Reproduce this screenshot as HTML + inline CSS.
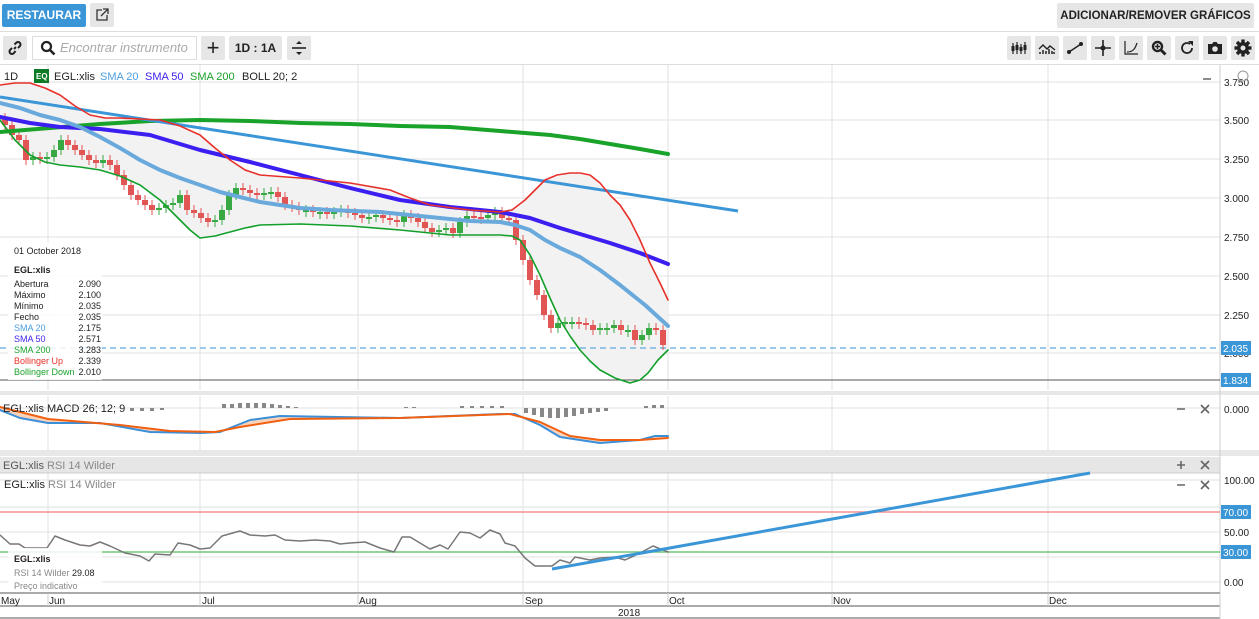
<!DOCTYPE html>
<html><head><meta charset="utf-8">
<style>
*{margin:0;padding:0;box-sizing:border-box}
body{width:1259px;height:619px;background:#fff;font-family:"Liberation Sans",Arial,sans-serif;position:relative;overflow:hidden;color:#222}
.a{position:absolute}
.btn{position:absolute;background:#e6e6e6;border-radius:2px;display:flex;align-items:center;justify-content:center;font-size:12px;font-weight:bold;color:#222;white-space:nowrap}
polyline{stroke-linejoin:round;stroke-linecap:round}
</style></head><body>
<div class="a" style="left:2px;top:4px;width:84px;height:23px;background:#3b96d8;border-radius:2px;color:#fff;font-weight:bold;font-size:12px;line-height:23px;text-align:center">RESTAURAR</div>
<div class="btn" style="left:90px;top:3px;width:24px;height:24px"><svg width="14" height="14" viewBox="0 0 14 14"><path d="M7 2H2v10h10V7" fill="none" stroke="#333" stroke-width="1.3"/><path d="M8 1h5v5M13 1L6 8" fill="none" stroke="#333" stroke-width="1.3"/></svg></div>
<div class="btn" style="left:1057px;top:3px;width:197px;height:25px;font-size:11.5px">ADICIONAR/REMOVER GRÁFICOS</div>
<div class="a" style="left:0;top:31px;width:1259px;height:1px;background:#ddd"></div>
<div class="btn" style="left:3px;top:36px;width:24px;height:24px"><svg width="16" height="16" viewBox="0 0 16 16"><path d="M7 9l2-2M5 8L3 10a2.5 2.5 0 003.5 3.5L8.5 11M11 8l2-2A2.5 2.5 0 009.5 2.5L7.5 4.5" fill="none" stroke="#222" stroke-width="2"/></svg></div>
<div class="a" style="left:32px;top:36px;width:165px;height:24px;border:1px solid #ddd;background:#fff"></div>
<svg class="a" style="left:40px;top:40px" width="16" height="16" viewBox="0 0 16 16"><circle cx="6.5" cy="6.5" r="4.5" fill="none" stroke="#222" stroke-width="2.2"/><path d="M10 10l4.5 4.5" stroke="#222" stroke-width="2.6"/></svg>
<div class="a" style="left:60px;top:40px;font-size:13px;font-style:italic;color:#aaa">Encontrar instrumento</div>
<div class="btn" style="left:201px;top:36px;width:24px;height:24px;font-size:22px;font-weight:normal">+</div>
<div class="btn" style="left:229px;top:36px;width:53px;height:24px">1D : 1A</div>
<div class="btn" style="left:287px;top:36px;width:24px;height:24px"><svg width="16" height="16" viewBox="0 0 16 16"><path d="M1 8h14" stroke="#222" stroke-width="1.6"/><path d="M5 4h6L8 1zM5 12h6l-3 3z" fill="#222"/></svg></div>
<div class="btn" style="left:1007px;top:36px;width:24px;height:24px"><svg width="18" height="16"><path d="M3 3v11M7 2v12M11 4v10M15 2v12" stroke="#222" stroke-width="1.2"/><path d="M1.5 6h3v5h-3zM5.5 5h3v5h-3zM9.5 7h3v4h-3zM13.5 5h3v5h-3z" fill="#222"/></svg></div>
<div class="btn" style="left:1035px;top:36px;width:24px;height:24px"><svg width="18" height="16"><path d="M1 9l4-4 4 4 3-3 5 4" fill="none" stroke="#222" stroke-width="1.4"/><path d="M2 14v-2M5 14v-4M8 14v-3M11 14v-5M14 14v-3M16 14v-2" stroke="#222" stroke-width="1.5"/></svg></div>
<div class="btn" style="left:1063px;top:36px;width:24px;height:24px"><svg width="18" height="16"><path d="M3 12L15 4" stroke="#222" stroke-width="1.5"/><circle cx="3" cy="12" r="2" fill="#222"/><circle cx="15" cy="4" r="2" fill="#222"/></svg></div>
<div class="btn" style="left:1091px;top:36px;width:24px;height:24px"><svg width="18" height="18"><path d="M9 1v16M1 9h16" stroke="#222" stroke-width="1.6"/><circle cx="9" cy="9" r="2.5" fill="#222"/></svg></div>
<div class="btn" style="left:1119px;top:36px;width:24px;height:24px"><svg width="16" height="16"><path d="M2 1v13h13" fill="none" stroke="#222" stroke-width="1.2"/><path d="M4 12c6 0 8-3 10-9" fill="none" stroke="#222" stroke-width="1.2"/></svg></div>
<div class="btn" style="left:1147px;top:36px;width:24px;height:24px"><svg width="16" height="16"><circle cx="6.5" cy="6.5" r="4.5" fill="none" stroke="#222" stroke-width="2.4"/><path d="M10 10l4.5 4.5" stroke="#222" stroke-width="3"/><path d="M6.5 4v5M4 6.5h5" stroke="#222" stroke-width="1.5"/></svg></div>
<div class="btn" style="left:1175px;top:36px;width:24px;height:24px"><svg width="16" height="16"><path d="M13 8a5 5 0 11-2-4" fill="none" stroke="#222" stroke-width="1.8"/><path d="M9 1h5v5z" fill="#222"/></svg></div>
<div class="btn" style="left:1203px;top:36px;width:24px;height:24px"><svg width="16" height="14"><path d="M1 3h4l1.5-2h3L11 3h4v10H1z" fill="#222"/><circle cx="8" cy="8" r="2.8" fill="#e6e6e6"/></svg></div>
<div class="btn" style="left:1231px;top:36px;width:24px;height:24px"><svg width="18" height="18" viewBox="0 0 18 18"><g fill="#222"><circle cx="9" cy="9" r="6"/><rect x="7.3" y="0.5" width="3.4" height="17" /><rect x="0.5" y="7.3" width="17" height="3.4"/><rect x="7.3" y="0.5" width="3.4" height="17" transform="rotate(45 9 9)"/><rect x="7.3" y="0.5" width="3.4" height="17" transform="rotate(-45 9 9)"/></g><circle cx="9" cy="9" r="2.5" fill="#e6e6e6"/></svg></div>
<div class="a" style="left:0;top:64px;width:1259px;height:1px;background:#ddd"></div>

<svg class="a" style="left:0;top:0" width="1259" height="619" font-family="Liberation Sans, Arial, sans-serif">
<g stroke="#e2e2e2" stroke-width="1">
<path d="M48 65V390M200 65V390M358 65V390M523 65V390M668 65V390M832 65V390M1048 65V390"/>
<path d="M0 82H1220M0 120H1220M0 159H1220M0 198H1220M0 237H1220M0 276H1220M0 315H1220M0 353H1220"/>
<path d="M48 396V450M200 396V450M358 396V450M523 396V450M668 396V450M832 396V450M1048 396V450M0 408H1220"/>
<path d="M48 473V593M200 473V593M358 473V593M523 473V593M668 473V593M832 473V593M1048 473V593"/>
<path d="M0 480H1220M0 507H1220M0 532H1220M0 557H1220M0 582H1220"/>
</g>
<rect x="0" y="391" width="1259" height="4" fill="#e8e8e8"/>
<rect x="0" y="450" width="1259" height="6" fill="#e8e8e8"/>
<rect x="0" y="457" width="1220" height="16" fill="#e6e6e6"/>
<path d="M0 473H1220" stroke="#ccc"/>
<path d="M1220 65V593" stroke="#ccc"/>
<path d="M0 85L30 83L60 95L90 115L120 118L160 120L200 135L230 160L260 175L300 178L350 183L390 190L430 205L470 210L500 212L520 205L545 180L570 173L590 175L610 195L630 220L650 263L668 300L668 350L645 375L630 383L600 370L580 350L560 320L540 275L520 240L500 235L450 235L400 230L350 226L300 224L260 225L230 232L200 238L180 220L140 185L100 170L60 165L30 155L0 120Z" fill="#f2f2f2"/>
<path d="M0 348H1220" stroke="#3b96d8" stroke-dasharray="6 4"/>
<path d="M0 380H1220" stroke="#555"/>
<g id="candles"></g>
<polyline points="0,132 50,128 100,124 150,121 200,120 250,121 300,123 350,124 400,126 450,127 500,131 550,135 580,139 610,144 640,149 668,154" fill="none" stroke="#1aa32a" stroke-width="4"/>
<polyline points="0,117 30,123 60,127 100,129 150,135 200,150 250,162 300,175 350,188 400,200 450,207 500,212 530,218 560,228 610,243 640,253 668,264" fill="none" stroke="#3b1ef0" stroke-width="4"/>
<path d="M0 97L738 211" stroke="#3b96d8" stroke-width="3"/>
<polyline points="0,103 20,108 40,115 60,120 80,127 100,137 120,148 140,160 160,170 180,178 200,185 220,192 240,197 260,202 280,205 300,208 330,210 380,212 420,216 470,221 500,222 515,225 530,230 545,240 560,248 580,257 600,270 620,285 645,305 668,326" fill="none" stroke="#6aa9dc" stroke-width="4"/>
<polyline points="0,85 15,83 30,83 45,88 60,95 75,106 90,115 105,118 120,118 160,120 180,126 200,135 215,148 230,160 245,170 260,175 300,178 350,183 390,190 410,198 430,205 470,210 500,212 512,210 525,200 535,190 545,180 557,175 570,173 580,173 590,175 600,183 610,195 620,205 630,220 640,240 650,263 660,283 668,300" fill="none" stroke="#e8302a" stroke-width="1.6"/>
<polyline points="0,120 15,140 30,155 45,162 60,165 80,167 100,170 120,176 140,185 160,200 180,220 190,230 200,238 215,236 230,232 245,228 260,225 300,224 350,226 400,230 450,235 500,235 512,236 520,240 530,255 540,275 550,298 560,320 570,336 580,350 590,361 600,370 615,378 630,383 640,380 648,373 658,360 668,350" fill="none" stroke="#12a02a" stroke-width="1.6"/>
<g fill="#888"><rect x="130" y="408" width="4" height="3"/><rect x="140" y="408" width="4" height="3"/><rect x="150" y="408" width="4" height="3"/><rect x="160" y="408" width="4" height="2"/><rect x="222" y="404" width="4" height="4"/><rect x="230" y="404" width="4" height="4"/><rect x="238" y="403" width="4" height="5"/><rect x="246" y="403" width="4" height="5"/><rect x="254" y="403" width="4" height="5"/><rect x="262" y="403" width="4" height="5"/><rect x="270" y="404" width="4" height="4"/><rect x="278" y="405" width="4" height="3"/><rect x="286" y="406" width="4" height="2"/><rect x="294" y="407" width="4" height="1"/><rect x="404" y="407" width="4" height="1"/><rect x="412" y="407" width="4" height="1"/><rect x="460" y="406" width="4" height="2"/><rect x="470" y="406" width="4" height="2"/><rect x="480" y="406" width="4" height="2"/><rect x="490" y="406" width="4" height="2"/><rect x="500" y="406" width="4" height="2"/><rect x="524" y="408" width="4" height="5"/><rect x="532" y="408" width="4" height="7"/><rect x="540" y="408" width="4" height="9"/><rect x="548" y="408" width="4" height="10"/><rect x="556" y="408" width="4" height="10"/><rect x="564" y="408" width="4" height="9"/><rect x="572" y="408" width="4" height="8"/><rect x="580" y="408" width="4" height="6"/><rect x="588" y="408" width="4" height="5"/><rect x="596" y="408" width="4" height="4"/><rect x="604" y="408" width="4" height="3"/><rect x="644" y="406" width="4" height="2"/><rect x="652" y="405" width="4" height="3"/><rect x="660" y="405" width="4" height="3"/></g>
<polygon points="0,407 48,419 120,425 170,431 215,432 240,427 290,419 400,418 510,414 540,422 570,436 600,440 640,440 668,438 668,436 655,436 640,440 600,443 560,437 540,425 515,414 500,414 400,418 280,416 250,420 220,432 200,433 150,432 100,423 48,423 20,418 0,410" fill="#f6c8a8" opacity="0.8"/>
<polyline points="0,410 20,418 48,423 100,423 150,432 200,433 220,432 250,420 280,416 400,418 500,414 515,414 540,425 560,437 600,443 640,440 655,436 668,436" fill="none" stroke="#3b8fd8" stroke-width="2"/>
<polyline points="0,407 48,419 120,425 170,431 215,432 240,427 290,419 400,418 510,414 540,422 570,436 600,440 640,440 668,438" fill="none" stroke="#f06010" stroke-width="2"/>
<path d="M0 512H1220" stroke="#f29090" stroke-width="1.5"/>
<path d="M0 552H1220" stroke="#70c878" stroke-width="1.5"/>
<polyline points="0,535 10,544 19,544 25,548 35,548 47,548 55,536 65,540 80,545 90,546 100,542 110,546 125,553 140,556 149,561 155,554 170,555 178,543 190,545 200,549 210,548 222,536 240,531 250,535 265,536 275,535 285,540 300,541 315,540 330,541 340,544 350,543 365,542 380,548 394,552 402,537 410,537 420,543 430,549 440,545 448,549 460,532 470,533 480,538 490,530 500,534 505,543 515,546 525,558 535,566 552,566 560,560 570,563 575,557 590,560 600,558 615,557 625,560 640,553 653,546 668,552" fill="none" stroke="#777" stroke-width="1.5"/>
<path d="M552 569L1090 473" stroke="#3b96d8" stroke-width="3"/>
<path d="M0 593H1220M0 606H1220M0 618H1220" stroke="#555"/>
<path d="M48 593V606M200 593V606M358 593V606M523 593V606M668 593V606M832 593V606M1048 593V606M1220 593V619" stroke="#ccc"/>
<g font-size="10" fill="#222"><text x="1" y="604">May</text><text x="49" y="604">Jun</text><text x="202" y="604">Jul</text><text x="359" y="604">Aug</text><text x="525" y="604">Sep</text><text x="669" y="604">Oct</text><text x="833" y="604">Nov</text><text x="1049" y="604">Dec</text><text x="618" y="616">2018</text></g>
<g font-size="10" fill="#222"><text x="1224" y="86">3.750</text><text x="1224" y="124">3.500</text><text x="1224" y="163">3.250</text><text x="1224" y="202">3.000</text><text x="1224" y="241">2.750</text><text x="1224" y="280">2.500</text><text x="1224" y="319">2.250</text><text x="1224" y="357">2.000</text><text x="1224" y="413">0.000</text><text x="1224" y="484">100.00</text><text x="1224" y="536">50.00</text><text x="1224" y="586">0.00</text></g>
<rect x="1221" y="341" width="30" height="14" fill="#3b96d8"/><text x="1223" y="352" font-size="10" fill="#fff">2.035</text>
<rect x="1221" y="373" width="30" height="14" fill="#3b96d8"/><text x="1223" y="384" font-size="10" fill="#fff">1.834</text>
<rect x="1221" y="505" width="30" height="14" fill="#3b96d8"/><text x="1223" y="516" font-size="10" fill="#fff">70.00</text>
<rect x="1221" y="545" width="30" height="14" fill="#3b96d8"/><text x="1223" y="556" font-size="10" fill="#fff">30.00</text>
<circle cx="1243" cy="76" r="5" fill="none" stroke="#999"/>
<g stroke="#666" stroke-width="1.6"><path d="M1203 79h8M1177 409h8M1177 485h8M1177 465h8M1181 461v8"/><path d="M1201 405l8 8M1209 405l-8 8M1201 461l8 8M1209 461l-8 8M1201 481l8 8M1209 481l-8 8"/></g>
<g font-size="11"><text x="4" y="80" fill="#222">1D</text><rect x="34" y="69" width="15" height="14" fill="#0f7a25"/><text x="36" y="79" font-size="8" font-weight="bold" fill="#fff">EQ</text><text x="54" y="80" fill="#222">EGL:xlis</text><text x="100" y="80" fill="#4a9ee0">SMA 20</text><text x="145" y="80" fill="#3b1ef0">SMA 50</text><text x="190" y="80" fill="#1aa32a">SMA 200</text><text x="242" y="80" fill="#222">BOLL 20; 2</text>
<text x="3" y="412" fill="#222">EGL:xlis  MACD 26; 12; 9</text>
<text x="3" y="469" fill="#555">EGL:xlis <tspan fill="#888">RSI 14 Wilder</tspan></text>
<text x="4" y="488" fill="#222">EGL:xlis <tspan fill="#888">RSI 14 Wilder</tspan></text></g>
<rect x="8" y="242" width="94" height="138" fill="#fff" opacity="0.85"/>
<g font-size="9"><text x="14" y="254" fill="#222">01 October 2018</text><text x="14" y="273" font-weight="bold" fill="#222">EGL:xlis</text>
<g fill="#222"><text x="14" y="287">Abertura</text><text x="14" y="298">Máximo</text><text x="14" y="309">Mínimo</text><text x="14" y="320">Fecho</text></g>
<text x="14" y="331" fill="#4a9ee0">SMA 20</text><text x="14" y="342" fill="#3b1ef0">SMA 50</text><text x="14" y="353" fill="#1aa32a">SMA 200</text><text x="14" y="364" fill="#e8302a">Bollinger Up</text><text x="14" y="375" fill="#1aa32a">Bollinger Down</text>
<g fill="#222" text-anchor="end"><text x="101" y="287">2.090</text><text x="101" y="298">2.100</text><text x="101" y="309">2.035</text><text x="101" y="320">2.035</text><text x="101" y="331">2.175</text><text x="101" y="342">2.571</text><text x="101" y="353">3.283</text><text x="101" y="364">2.339</text><text x="101" y="375">2.010</text></g></g>
<rect x="8" y="548" width="94" height="44" fill="#fff" opacity="0.85"/>
<g font-size="9"><text x="14" y="562" font-weight="bold" fill="#222">EGL:xlis</text><text x="14" y="576" fill="#888">RSI 14 Wilder <tspan fill="#222">29.08</tspan></text><text x="14" y="589" fill="#888">Preço indicativo</text></g>
</svg>
<script>
var c=[125,135,140,160,157,158,157,150,140,145,150,155,160,163,160,165,175,185,195,200,205,210,208,205,203,195,210,213,218,222,220,210,195,188,190,193,195,193,192,197,205,207,210,210,212,212,213,212,210,213,215,218,217,215,218,220,222,215,218,222,228,232,230,228,233,222,216,217,218,215,212,218,220,240,260,280,295,315,328,323,322,322,323,325,330,328,328,325,330,330,340,335,328,330,345];
var g=document.getElementById('candles'),s='',p=118;
for(var i=0;i<c.length;i++){var x=5+i*7,y=c[i],t=Math.min(p,y),b=Math.max(p,y);if(b-t<2)b=t+2;var col=y>p?'#e25555':'#38a843';s+='<path d="M'+x+' '+(t-5)+'V'+(b+5)+'" stroke="'+col+'"/><rect x="'+(x-3)+'" y="'+t+'" width="6" height="'+(b-t)+'" fill="'+col+'"/>';p=y;}
g.innerHTML=s;
</script>
</body></html>
